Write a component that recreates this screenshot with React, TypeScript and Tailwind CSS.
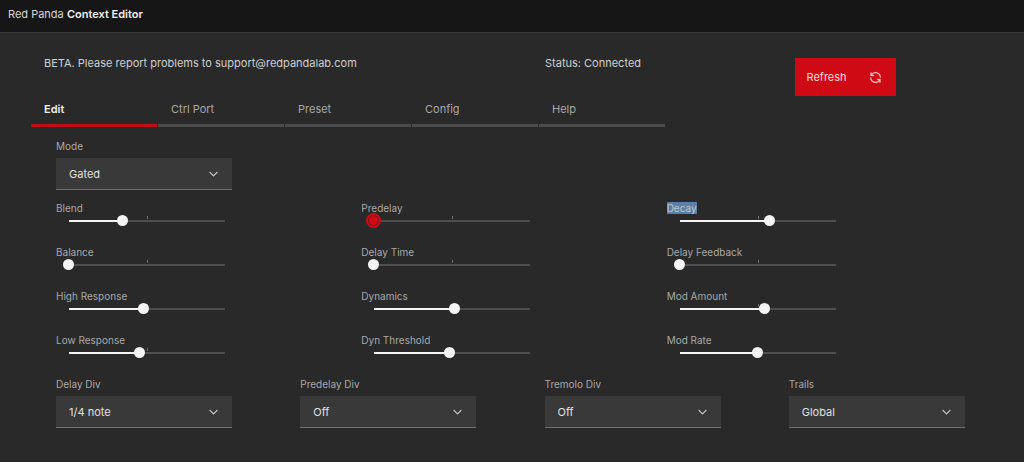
import { useState } from "react";
import clsx from "clsx";

const TABS = ["Edit", "Ctrl Port", "Preset", "Config", "Help"];

const SLIDERS = [
  { id: "blend", label: "Blend", value: 34.5 },
  { id: "predelay", label: "Predelay", value: 0, active: true },
  { id: "decay", label: "Decay", value: 57.5, marked: true },
  { id: "balance", label: "Balance", value: 0 },
  { id: "delay-time", label: "Delay Time", value: 0 },
  { id: "delay-feedback", label: "Delay Feedback", value: 0 },
  { id: "high-response", label: "High Response", value: 48 },
  { id: "dynamics", label: "Dynamics", value: 51.5 },
  { id: "mod-amount", label: "Mod Amount", value: 54.5 },
  { id: "low-response", label: "Low Response", value: 45 },
  { id: "dyn-threshold", label: "Dyn Threshold", value: 48.5 },
  { id: "mod-rate", label: "Mod Rate", value: 50 },
];

const DIVISIONS = ["Off", "1/4 note", "1/8 note", "1/16 note"];

const SELECTS = [
  { id: "delay-div", label: "Delay Div", value: "1/4 note", options: DIVISIONS },
  { id: "predelay-div", label: "Predelay Div", value: "Off", options: DIVISIONS },
  { id: "tremolo-div", label: "Tremolo Div", value: "Off", options: DIVISIONS },
  { id: "trails", label: "Trails", value: "Global", options: ["Global", "On", "Off"] },
];

function RenewIcon() {
  return (
    <svg viewBox="0 0 32 32" fill="currentColor" className="size-[13px]" aria-hidden="true">
      <g stroke="currentColor" strokeWidth="0.8">
        <path d="M12 10H6.78A11 11 0 0 1 27 16h2A13 13 0 0 0 6 7.68V4H4v8h8Z" />
        <path d="M20 22h5.22A11 11 0 0 1 5 16H3a13 13 0 0 0 23 8.32V28h2V20H20Z" />
      </g>
    </svg>
  );
}

function SelectField({
  id,
  label,
  value,
  options,
}: {
  id: string;
  label: string;
  value: string;
  options: string[];
}) {
  return (
    <div className="w-44">
      <label htmlFor={id} className="mb-1 block text-[10px] leading-4 text-[#a8a8a8]">
        {label}
      </label>
      <div className="relative">
        <select
          id={id}
          defaultValue={value}
          className="block h-8 w-full appearance-none border-b border-[#6f6f6f] bg-[#393939] pr-8 pl-[13px] text-[11px] text-[#e0e0e0] outline-none"
        >
          {options.map((o) => (
            <option key={o}>{o}</option>
          ))}
        </select>
        <svg
          viewBox="0 0 16 16"
          fill="currentColor"
          className="pointer-events-none absolute top-1/2 right-3 size-[13px] -translate-y-1/2 text-[#d0d0d0]"
          aria-hidden="true"
        >
          <path d="M8 11L3 6 3.7 5.3 8 9.6 12.3 5.3 13 6z" stroke="currentColor" strokeWidth="0.4" />
        </svg>
      </div>
    </div>
  );
}

function SliderField({
  id,
  label,
  initial,
  active,
  marked,
}: {
  id: string;
  label: string;
  initial: number;
  active?: boolean;
  marked?: boolean;
}) {
  const [value, setValue] = useState(initial);

  return (
    <div className="h-11">
      <label htmlFor={id} className="block text-[10px] leading-4 text-[#a8a8a8]">
        <span className={clsx(marked && "bg-[#5780ab] text-[#c6c6c6]")}>{label}</span>
      </label>
      {/* track sits behind the input, inset by half a thumb on each side */}
      <div className="relative -mt-px ml-[7px] flex h-[11px] w-[168px] items-center">
        <div className="absolute inset-x-[6px] top-[5px] h-0.5 bg-[#4f4f4f]">
          <div className="h-full bg-[#f4f4f4]" style={{ width: `${value}%` }} />
        </div>
        <div className="absolute top-px left-1/2 h-[3px] w-px bg-[#6f6f6f]" />
        <input
          id={id}
          type="range"
          min={0}
          max={100}
          step={0.5}
          value={value}
          onChange={(e) => setValue(Number(e.target.value))}
          className={clsx(
            "relative m-0 h-[11px] w-full cursor-pointer appearance-none bg-transparent outline-none",
            "[&::-webkit-slider-thumb]:size-[11px] [&::-webkit-slider-thumb]:appearance-none [&::-webkit-slider-thumb]:rounded-full",
            active
              ? "[&::-webkit-slider-thumb]:bg-[#d00a14] [&::-webkit-slider-thumb]:shadow-[inset_0_0_0_1px_#7a161b,0_0_0_2px_#d00a14]"
              : "[&::-webkit-slider-thumb]:bg-[#f4f4f4]"
          )}
        />
      </div>
    </div>
  );
}

export default function App() {
  const [tab, setTab] = useState("Edit");

  return (
    <div className="min-h-screen overflow-x-hidden bg-[#292929] font-['Inter',sans-serif] text-[11px] leading-4 text-[#d0d0d0]">
      <header className="flex h-[33px] items-center border-b border-[#393939] bg-[#161616] px-2 pb-1">
        <a href="#" className="text-[#d6d6d6]">
          Red Panda <span className="font-semibold text-[#f0f0f0]">Context Editor</span>
        </a>
      </header>

      <main className="-mr-[9px] pt-[22px] pl-[31px]">
        <div className="grid grid-cols-4 items-start">
          <p className="col-span-2 pl-[13px]">
            BETA. Please report problems to support@redpandalab.com
          </p>
          <p className="pl-[13px]">Status: Connected</p>
          <div className="pt-[3px] pl-3">
            <button
              type="button"
              className="flex h-[38px] w-[101px] items-center justify-between bg-[#d00a14] pr-[14px] pl-3 text-[#fbdada]"
            >
              Refresh
              <RenewIcon />
            </button>
          </div>
        </div>

        <div role="tablist" className="flex gap-px">
          {TABS.map((name) => (
            <button
              key={name}
              type="button"
              role="tab"
              aria-selected={tab === name}
              onClick={() => setTab(name)}
              className={clsx(
                "w-[126px] border-b-3 pt-[5px] pb-[7px] pl-[13px] text-left",
                tab === name
                  ? "border-[#c00c15] font-semibold text-[#f0f0f0]"
                  : "border-[#4c4c4c] text-[#a8a8a8]"
              )}
            >
              {name}
            </button>
          ))}
        </div>

        <section role="tabpanel" aria-label={tab} className="pt-[11px] pb-8 pl-[25px]">
          <SelectField id="mode" label="Mode" value="Gated" options={["Gated", "Room", "Hall", "Plate"]} />
          <div className="mt-[10px] grid grid-cols-[5fr_5fr_6fr]">
            {SLIDERS.map((s) => (
              <SliderField
                key={s.id}
                id={s.id}
                label={s.label}
                initial={s.value}
                active={s.active}
                marked={s.marked}
              />
            ))}
          </div>
          <div className="grid grid-cols-4">
            {SELECTS.map((s) => (
              <SelectField key={s.id} {...s} />
            ))}
          </div>
        </section>
      </main>
    </div>
  );
}
